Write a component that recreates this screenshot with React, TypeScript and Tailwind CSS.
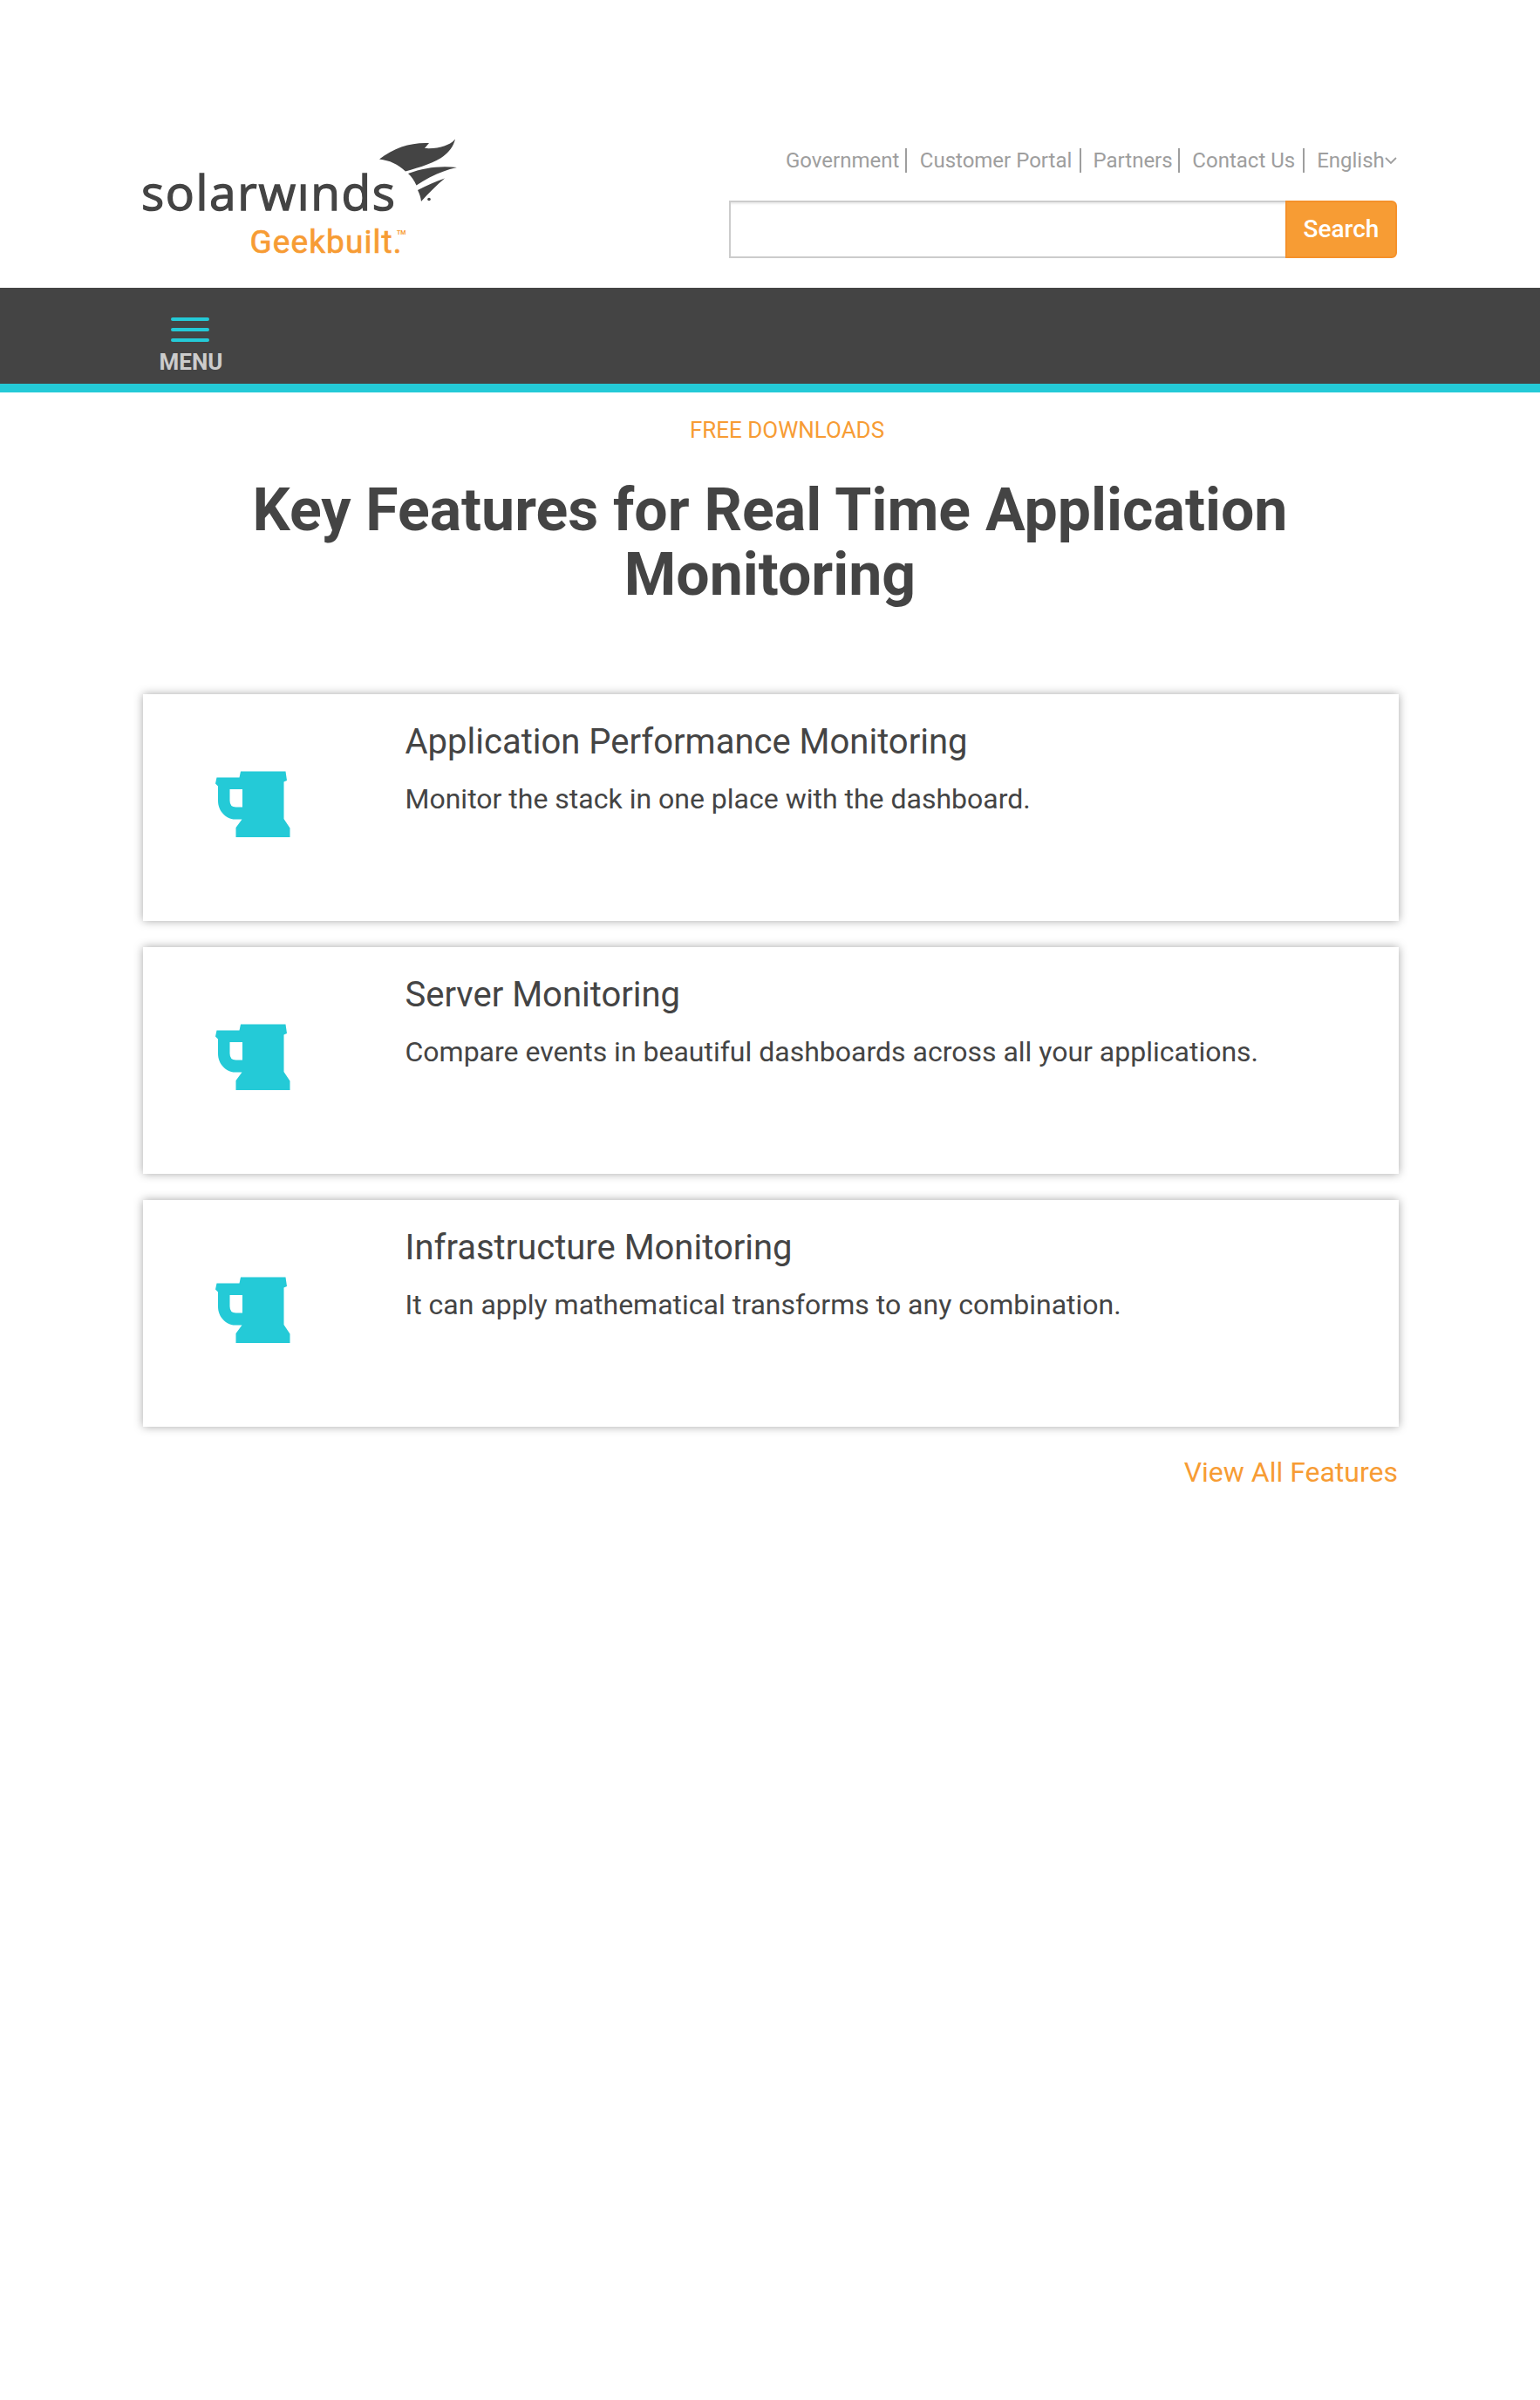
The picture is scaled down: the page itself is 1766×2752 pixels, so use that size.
const features = [
  { title: "Application Performance Monitoring", text: "Monitor the stack in one place with the dashboard." },
  { title: "Server Monitoring", text: "Compare events in beautiful dashboards across all your applications." },
  { title: "Infrastructure Monitoring", text: "It can apply mathematical transforms to any combination." },
];

function Logo() {
  return (
    <svg width="372" height="150" viewBox="-8 0 372 150" role="img" aria-label="solarwinds Geekbuilt" className="-ml-2 block">
      <text x="-2" y="91" fontSize="55" fontWeight="500" fill="#444" stroke="#444" strokeWidth="1.300" fontFamily="'Open Sans'" textLength="291" lengthAdjust="spacing">solarwınds</text>
      <g fill="#444">
        <path d="M271 32.500C288 19 308 13 328 14L323 20C338 21 352 17 358 9.500C352 33 326 39 301 46.500C292 38 283 34 271 32.500Z" />
        <path d="M304 49C323 42 341 40 360 42C342 46 326 54 313.500 62.500C311 57 308 52.500 304 49Z" />
        <path d="M315 68C325 63 335 58 346 54.500C336 63 328 71 319 81C318.500 76 317 72 315 68Z" />
        <circle cx="328" cy="78.500" r="1.800" />
      </g>
      <text x="122.500" y="140" fontSize="37" fill="#f79c34" stroke="#f79c34" strokeWidth="0.700" fontFamily="Roboto">
        <tspan textLength="174" lengthAdjust="spacing">Geekbuilt.</tspan>
        <tspan x="291" y="118.500" fontSize="7" strokeWidth="0" fontWeight="700">TM</tspan>
      </text>
    </svg>
  );
}

function Mug() {
  return (
    <svg width="86" height="76" viewBox="0 0 86 76" className="block" fill="#24cad7">
      <path fillRule="evenodd" d="M1.500 7.500H27.500L29 0.500H80.500L82 11L78.500 12.500V55L85.500 65.500V76H23.500V65L30.500 55.500H23C12 55.500 3 46 3 34V17.500L0 14.500ZM16.500 21V34Q16.500 41.500 23.500 41.500H31V21Z" />
    </svg>
  );
}

export default function App() {
  const divider = <span className="h-7 w-0.5 bg-[#9e9e9e]" />;
  return (
    <div className="min-h-[2752px] w-full bg-white font-['Roboto',sans-serif] text-[#444]">
      <header className="flex h-[330px] justify-between pr-[164px] pl-[164px]">
        <div className="pt-[150px]"><Logo /></div>
        <div className="flex w-[766px] flex-col pt-[170px]">
          <nav className="flex h-7 items-center text-[24px] leading-7 whitespace-nowrap text-[#9e9e9e]">
            <a className="ml-[65px] w-[137px]">Government</a>{divider}
            <a className="ml-[15px] w-[183px]">Customer Portal</a>{divider}
            <a className="ml-[14px] w-[98px]">Partners</a>{divider}
            <a className="ml-[14px] w-[127px]">Contact Us</a>{divider}
            <a className="ml-[14px] w-[78px]">English</a>
            <svg width="14" height="8" viewBox="0 0 14 8" fill="none" stroke="#9e9e9e" strokeWidth="1.800"><path d="M1 1L7 7L13 1" /></svg>
          </nav>
          <form className="mt-8 flex h-[66px]">
            <input aria-label="Search" className="h-full min-w-0 flex-1 border-2 border-r-0 border-[#ccc] shadow-[inset_0_2px_2px_rgba(0,0,0,0.075)] outline-none" />
            <button type="button" className="h-full w-[128px] rounded-r-md border-2 border-[#f5912a] bg-[#f79c34] text-[28px] font-medium text-white">Search</button>
          </form>
        </div>
      </header>
      <div className="h-[120px] border-b-[10px] border-[#24cad7] bg-[#444] pt-[34px] pl-[182px]">
        <div className="flex w-[74px] flex-col items-center">
          <div className="flex w-[44px] -translate-x-px flex-col gap-2">
            <span className="h-1 rounded-xs bg-[#24cad7]" />
            <span className="h-1 rounded-xs bg-[#24cad7]" />
            <span className="h-1 rounded-xs bg-[#24cad7]" />
          </div>
          <span className="mt-2 text-[26px] leading-[30px] font-bold text-[#ccc]">MENU</span>
        </div>
      </div>
      <main className="px-[164px]">
        <div className="pt-[28px] pl-[39px] text-center text-[26px] leading-[30px] text-[#f79c34]">FREE DOWNLOADS</div>
        <h1 className="mt-[40px] text-center text-[68px] leading-[74px] font-bold">Key Features for Real Time Application<br />Monitoring</h1>
        <div className="mt-[100px] flex flex-col gap-[30px]">
          {features.map((f) => (
            <section key={f.title} className="flex h-[260px] w-[1440px] bg-white pl-[83px] shadow-[0_0_10px_rgba(0,0,0,0.35)]">
              <div className="w-[217px] pt-[88px]"><Mug /></div>
              <div className="pl-[0.5px]">
                <h2 className="mt-[31px] text-[40px] leading-[48px]">{f.title}</h2>
                <p className="mt-[21px] text-[32px] leading-[40px]">{f.text}</p>
              </div>
            </section>
          ))}
        </div>
        <div className="mt-[32px] -mr-px text-right text-[32px] leading-[40px] text-[#f79c34]">View All Features</div>
      </main>
    </div>
  );
}
